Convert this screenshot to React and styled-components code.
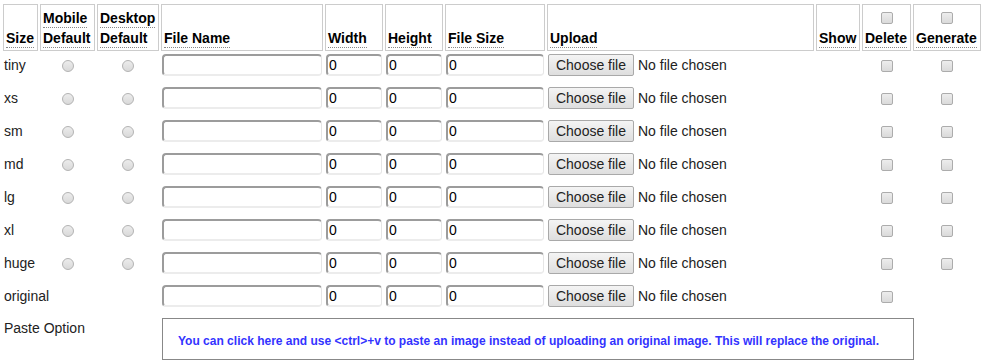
import React from 'react'
import styled, { createGlobalStyle } from 'styled-components'

const GlobalStyle = createGlobalStyle`
  body {
    margin: 0;
    background: #fff;
    font-family: 'Liberation Sans', Arial, sans-serif;
    font-size: 14px;
    color: #222;
  }
`

const sizes = [
  { name: 'tiny', radios: true, del: true, gen: true },
  { name: 'xs', radios: true, del: true, gen: true },
  { name: 'sm', radios: true, del: true, gen: true },
  { name: 'md', radios: true, del: true, gen: true },
  { name: 'lg', radios: true, del: true, gen: true },
  { name: 'xl', radios: true, del: true, gen: true },
  { name: 'huge', radios: true, del: true, gen: true },
  { name: 'original', radios: false, del: true, gen: false },
]

const columns = [35, 55, 62, 162, 58, 58, 100, 267, 44, 49, 68]

const Table = styled.table`
  margin: 2px 1px;
  width: 982px;
  table-layout: fixed;
  border-collapse: separate;
  border-spacing: 2px;
`

const HeadRow = styled.tr`
  height: 47px;
`

const HeadCell = styled.th`
  border: 1px solid #ccc;
  padding: 2px;
  text-align: left;
  vertical-align: bottom;
  font-weight: bold;
  font-size: 14px;
  line-height: 20px;
  color: #000;
  white-space: nowrap;
`

const Abbr = styled.abbr`
  text-decoration: none;
  border-bottom: 1px dotted #888;
  padding-bottom: 1px;
`

const HeadCheck = styled.div`
  height: 20px;
  display: flex;
  align-items: center;
  justify-content: center;
`

const Row = styled.tr`
  height: 31px;
`

const Cell = styled.td`
  padding: 1px;
  vertical-align: top;
  line-height: ${(p) => p.$lh || 22}px;
  text-align: ${(p) => (p.$center ? 'center' : 'left')};
  white-space: nowrap;
`

const Radio = styled.span`
  display: block;
  box-sizing: border-box;
  width: 12px;
  height: 12px;
  margin: 6px auto 0;
  border: 1px solid #b3b3b3;
  border-radius: 50%;
  background: linear-gradient(#ececec, #d9d9d9);
`

const Check = styled.span`
  display: block;
  box-sizing: border-box;
  width: 12px;
  height: 12px;
  margin: ${(p) => (p.$head ? '0' : '6px auto 0')};
  border: 1px solid #acacac;
  border-radius: 2px;
  background: linear-gradient(#ededed, #dadada);
`

const TextInput = styled.input`
  box-sizing: border-box;
  display: block;
  width: 100%;
  height: 22px;
  padding: 0 1px;
  margin: 0;
  border-style: solid;
  border-width: 2px 1px 2px 2px;
  border-color: #9c9c9c #e6e6e6 #ececec #9c9c9c;
  border-radius: 4px;
  font-family: 'Liberation Sans', Arial, sans-serif;
  font-size: 14px;
  color: #000;
  background: #fff;
  outline: none;
`

const FileButton = styled.button`
  box-sizing: border-box;
  width: 86px;
  height: 22px;
  padding: 0;
  border: 1px solid #a9a9a9;
  border-radius: 2px;
  background: linear-gradient(#f4f4f4, #dedede);
  font-family: 'Liberation Sans', Arial, sans-serif;
  font-size: 14px;
  color: #222;
  vertical-align: top;
`

const FileStatus = styled.span`
  margin-left: 4px;
  color: #222;
`

const PasteBox = styled.div`
  box-sizing: border-box;
  width: 752px;
  height: 42px;
  padding: 15px 15px 0;
  border: 1px solid #888;
  font-size: 12px;
  font-weight: bold;
  line-height: 14px;
  color: #3333ff;
  white-space: nowrap;
`

const SizeRow = ({ size }) => (
  <Row>
    <Cell>{size.name}</Cell>
    <Cell>{size.radios && <Radio />}</Cell>
    <Cell>{size.radios && <Radio />}</Cell>
    <Cell>
      <TextInput type='text' defaultValue='' />
    </Cell>
    <Cell>
      <TextInput type='text' defaultValue='0' />
    </Cell>
    <Cell>
      <TextInput type='text' defaultValue='0' />
    </Cell>
    <Cell>
      <TextInput type='text' defaultValue='0' />
    </Cell>
    <Cell>
      <FileButton type='button'>Choose file</FileButton>
      <FileStatus>No file chosen</FileStatus>
    </Cell>
    <Cell />
    <Cell>{size.del && <Check />}</Cell>
    <Cell>{size.gen && <Check />}</Cell>
  </Row>
)

const App = () => {
  return (
    <>
      <GlobalStyle />
      <Table>
        <colgroup>
          {columns.map((w, i) => (
            <col key={i} style={{ width: w }} />
          ))}
        </colgroup>
        <thead>
          <HeadRow>
            <HeadCell>
              <Abbr>Size</Abbr>
            </HeadCell>
            <HeadCell>
              <Abbr>Mobile</Abbr>
              <br />
              <Abbr>Default</Abbr>
            </HeadCell>
            <HeadCell>
              <Abbr>Desktop</Abbr>
              <br />
              <Abbr>Default</Abbr>
            </HeadCell>
            <HeadCell>
              <Abbr>File Name</Abbr>
            </HeadCell>
            <HeadCell>
              <Abbr>Width</Abbr>
            </HeadCell>
            <HeadCell>
              <Abbr>Height</Abbr>
            </HeadCell>
            <HeadCell>
              <Abbr>File Size</Abbr>
            </HeadCell>
            <HeadCell>
              <Abbr>Upload</Abbr>
            </HeadCell>
            <HeadCell>
              <Abbr>Show</Abbr>
            </HeadCell>
            <HeadCell>
              <HeadCheck>
                <Check $head />
              </HeadCheck>
              <Abbr>Delete</Abbr>
            </HeadCell>
            <HeadCell>
              <HeadCheck>
                <Check $head />
              </HeadCheck>
              <Abbr>Generate</Abbr>
            </HeadCell>
          </HeadRow>
        </thead>
        <tbody>
          {sizes.map((s) => (
            <SizeRow key={s.name} size={s} />
          ))}
          <tr>
            <Cell colSpan={3} $lh={20}>
              Paste Option
            </Cell>
            <Cell colSpan={8}>
              <PasteBox>
                You can click here and use &lt;ctrl&gt;+v to paste an image
                instead of uploading an original image. This will replace the
                original.
              </PasteBox>
            </Cell>
          </tr>
        </tbody>
      </Table>
    </>
  )
}

export default App
